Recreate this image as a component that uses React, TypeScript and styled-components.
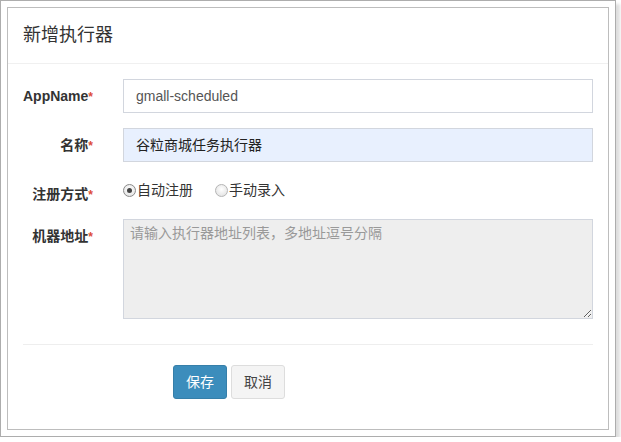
import React from "react";
import styled, { createGlobalStyle } from "styled-components";

const Global = createGlobalStyle`
  html, body { margin: 0; padding: 0; background: #fff; }
  body { font-family: "Liberation Sans", "Noto Sans CJK SC", sans-serif; color: #333; }
  * { box-sizing: border-box; }
`;

const Frame = styled.div`
  width: 616px;
  height: 437px;
  border: 1px solid #adadad;
  padding: 6px;
  background: #fff;
  box-shadow: 4px 4px 3px rgba(0, 0, 0, 0.13);
`;

const Modal = styled.div`
  width: 602px;
  height: 423px;
  border: 1px solid #bdbdbd;
  background: #fff;
  display: flex;
  flex-direction: column;
`;

const Header = styled.div`
  padding: 15px;
  border-bottom: 1px solid #f0f0f0;
`;

const Title = styled.h4`
  margin: 0;
  font-size: 18px;
  font-weight: normal;
  line-height: 25px;
  color: #333;
`;

const Body = styled.div`
  padding: 15px;
`;

const Row = styled.div<{ $mb?: number }>`
  display: grid;
  grid-template-columns: 100px 1fr;
  margin: 0 -15px ${(p) => (p.$mb ?? 15)}px;
`;

const Label = styled.label`
  padding: 7px 15px 0;
  text-align: right;
  font-weight: bold;
  font-size: 14px;
  line-height: 20px;
  color: #333;
`;

const Star = styled.span`
  color: #dd4b39;
  font-size: 12px;
  vertical-align: top;
  position: relative;
  top: 1px;
`;

const Field = styled.div`
  padding: 0 15px;
`;

const Input = styled.div<{ $autofill?: boolean }>`
  height: 34px;
  border: 1px solid #d2d6de;
  background: ${(p) => (p.$autofill ? "#e8f0fe" : "#fff")};
  padding: 6px 12px;
  font-size: 14px;
  line-height: 20px;
  color: ${(p) => (p.$autofill ? "#222" : "#555")};
`;

const Radios = styled.div`
  display: flex;
  gap: 22px;
  padding-top: 2px;
  height: 27px;
  align-items: flex-start;
`;

const RadioLabel = styled.label`
  display: flex;
  align-items: center;
  font-size: 14px;
  line-height: 20px;
  color: #333;
  padding-top: 1px;
`;

const RadioDot = styled.span<{ $checked?: boolean }>`
  width: 13px;
  height: 13px;
  border-radius: 50%;
  border: 1px solid ${(p) => (p.$checked ? "#8a8a8a" : "#b5b5b5")};
  background: radial-gradient(circle at 50% 40%, #fff 0%, #e6e6e6 75%, #d4d4d4 100%);
  margin-right: 1px;
  display: inline-flex;
  align-items: center;
  justify-content: center;
  &::after {
    content: "";
    display: ${(p) => (p.$checked ? "block" : "none")};
    width: 5px;
    height: 5px;
    border-radius: 50%;
    background: #444;
  }
`;

const TextArea = styled.textarea`
  display: block;
  width: 100%;
  height: 100px;
  border: 1px solid #d2d6de;
  background: #eee;
  padding: 3px 6px 6px;
  font-family: "Liberation Sans", "Noto Sans CJK SC", sans-serif;
  font-size: 14px;
  line-height: 20px;
  color: #555;
  resize: vertical;
  outline: none;
  &::placeholder { color: #999; }
`;

const Divider = styled.div`
  height: 1px;
  background: #eeeeee;
  margin: 25px 0 20px;
`;

const Actions = styled.div`
  display: flex;
  gap: 4px;
  padding-left: 150px;
`;

const Button = styled.button<{ $primary?: boolean }>`
  height: 34px;
  padding: 6px 12px;
  font-family: "Liberation Sans", "Noto Sans CJK SC", sans-serif;
  font-size: 14px;
  line-height: 20px;
  border-radius: 3px;
  border: 1px solid ${(p) => (p.$primary ? "#367fa9" : "#ddd")};
  background: ${(p) => (p.$primary ? "#3c8dbc" : "#f4f4f4")};
  color: ${(p) => (p.$primary ? "#fff" : "#444")};
  cursor: pointer;
`;

export default function App() {
  return (
    <>
      <Global />
      <Frame>
        <Modal>
          <Header>
            <Title>新增执行器</Title>
          </Header>
          <Body>
            <Row>
              <Label>
                AppName<Star>*</Star>
              </Label>
              <Field>
                <Input>gmall-scheduled</Input>
              </Field>
            </Row>
            <Row>
              <Label>
                名称<Star>*</Star>
              </Label>
              <Field>
                <Input $autofill>谷粒商城任务执行器</Input>
              </Field>
            </Row>
            <Row>
              <Label>
                注册方式<Star>*</Star>
              </Label>
              <Field>
                <Radios>
                  <RadioLabel>
                    <RadioDot $checked />
                    自动注册
                  </RadioLabel>
                  <RadioLabel>
                    <RadioDot />
                    手动录入
                  </RadioLabel>
                </Radios>
              </Field>
            </Row>
            <Row>
              <Label>
                机器地址<Star>*</Star>
              </Label>
              <Field>
                <TextArea placeholder="请输入执行器地址列表，多地址逗号分隔" readOnly />
              </Field>
            </Row>
            <Divider />
            <Actions>
              <Button $primary>保存</Button>
              <Button>取消</Button>
            </Actions>
          </Body>
        </Modal>
      </Frame>
    </>
  );
}
